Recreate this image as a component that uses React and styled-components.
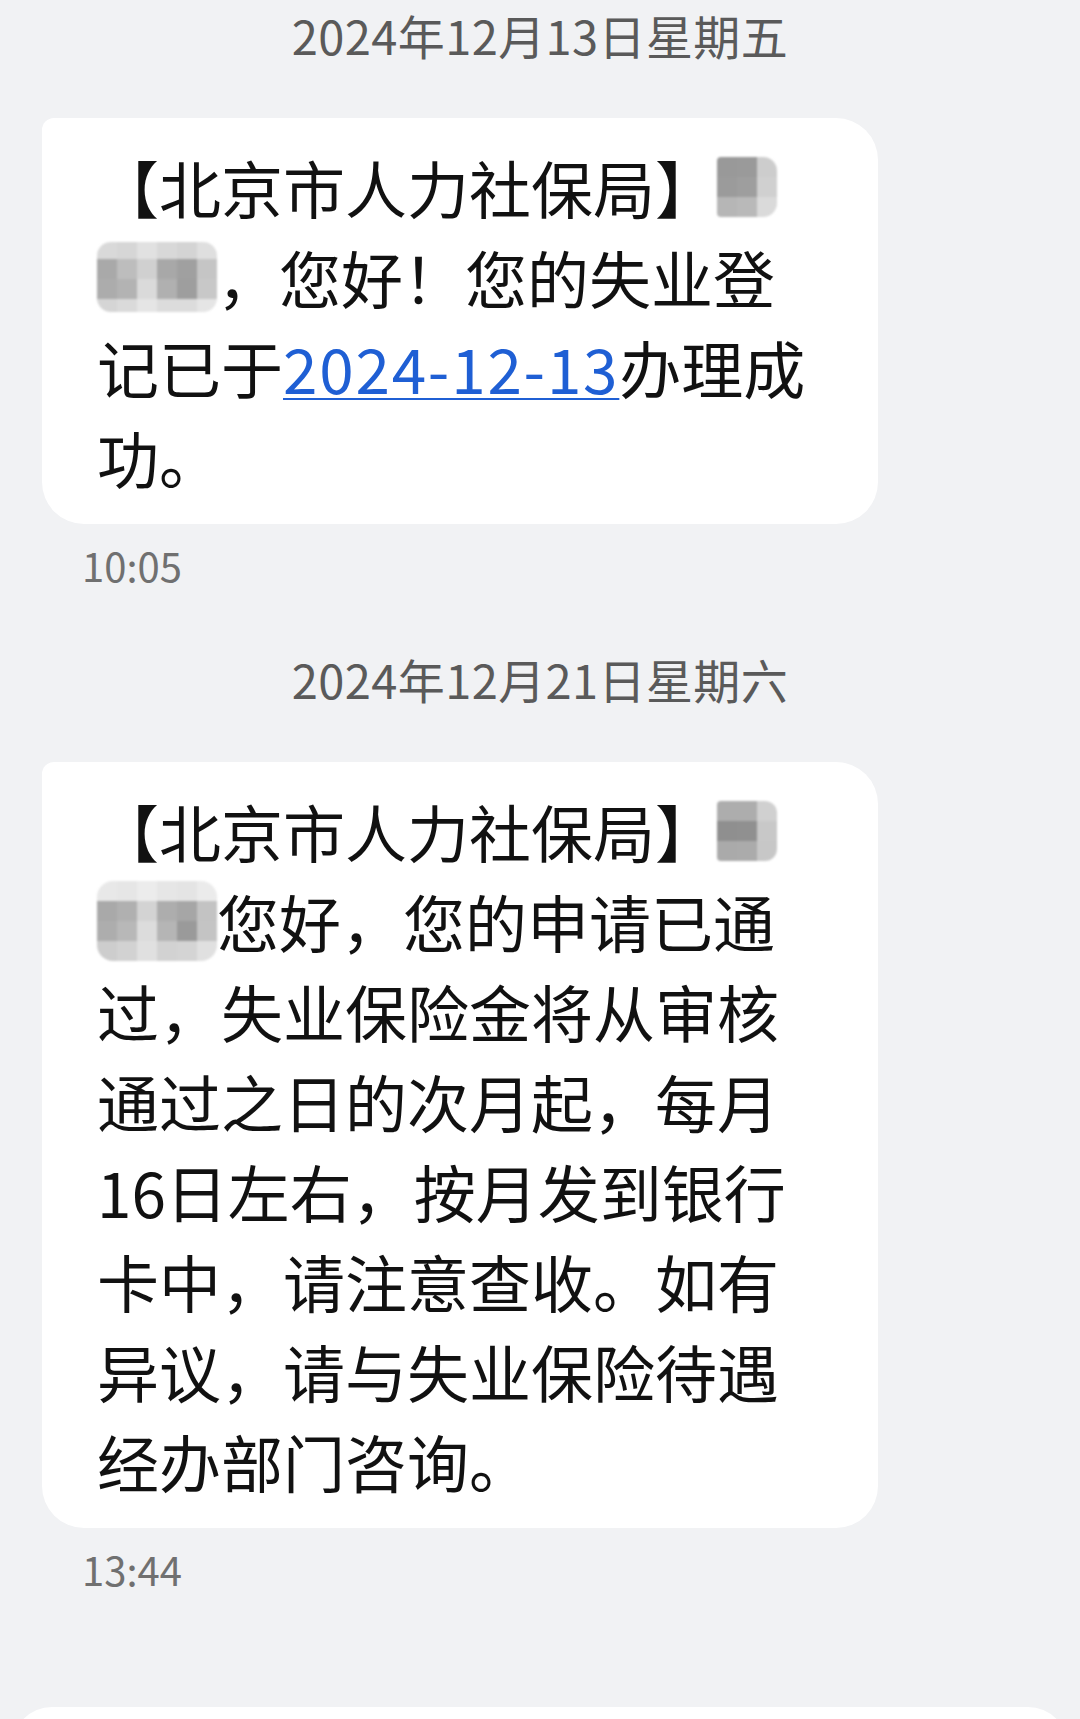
import React from "react";
import styled, { createGlobalStyle } from "styled-components";

const GlobalStyle = createGlobalStyle`
  html, body {
    margin: 0;
    padding: 0;
    background: #f1f2f4;
  }
  body {
    font-family: "Noto Sans CJK SC", "Noto Sans", sans-serif;
    -webkit-font-smoothing: antialiased;
  }
`;

const Page = styled.div`
  display: flex;
  flex-direction: column;
  height: 1719px;
  overflow: hidden;
  background: #f1f2f4;
`;

const DateLabel = styled.div`
  height: 70px;
  line-height: 70px;
  margin-top: ${(p) => p.$top}px;
  text-align: center;
  font-size: 47px;
  color: #5a5a5a;
  letter-spacing: 0.4px;
`;

const Bubble = styled.div`
  box-sizing: border-box;
  width: 836px;
  margin: 48px 0 0 42px;
  padding: 24px 40px 22px 55px;
  background: #ffffff;
  border-radius: 12px 42px 42px 42px;
  color: #111111;
  font-size: 62px;
`;

const Line = styled.div`
  display: flex;
  align-items: center;
  height: 90px;
  line-height: 90px;
  white-space: nowrap;
`;

const Link = styled.span`
  color: #1f5fd4;
  text-decoration: underline;
  text-decoration-thickness: 2px;
  text-underline-offset: 4px;
  letter-spacing: 1.8px;
`;

const TimeLabel = styled.div`
  height: 50px;
  line-height: 50px;
  margin: 16px 0 0 82px;
  font-size: 40px;
  color: #707070;
`;

const Composer = styled.div`
  height: 120px;
  margin: 113px 12px 0 12px;
  flex-shrink: 0;
  background: #ffffff;
  border-radius: 40px 40px 0 0;
`;

const Mosaic = styled.span`
  display: inline-grid;
  grid-template-columns: repeat(${(p) => p.$cols}, 20px);
  grid-template-rows: ${(p) => p.$rows};
  border-radius: ${(p) => p.$radius};
  overflow: hidden;
  filter: blur(0.8px);
  flex-shrink: 0;
`;

const Cell = styled.span`
  background: ${(p) => p.$tone};
`;

function Blur({ cols, rows, tones, radius }) {
  return (
    <Mosaic $cols={cols} $rows={rows} $radius={radius} aria-hidden="true">
      {tones.map((t, i) => (
        <Cell key={i} $tone={t} />
      ))}
    </Mosaic>
  );
}

const blurA = {
  cols: 3,
  rows: "20px 20px 20px",
  radius: "4px 14px 14px 4px",
  tones: [
    "#999999", "#9a9a9a", "#cdcdcd",
    "#9b9b9b", "#9e9e9e", "#d0d0d0",
    "#b6b6b6", "#b9b9b9", "#dadada",
  ],
};

const blurB = {
  cols: 6,
  rows: "17px 20px 20px 13px",
  radius: "14px",
  tones: [
    "#d9d9d9", "#d6d6d6", "#e1e1e1", "#d8d8d8", "#d4d4d4", "#dfdfdf",
    "#a9a9a9", "#bdbdbd", "#d0d0d0", "#a8a8a8", "#a0a0a0", "#c5c5c5",
    "#acacac", "#b3b3b3", "#dadada", "#b0b0b0", "#9e9e9e", "#c8c8c8",
    "#d5d5d5", "#dadada", "#e5e5e5", "#dcdcdc", "#dcdcdc", "#e5e5e5",
  ],
};

const blurC = {
  cols: 3,
  rows: "20px 20px 20px",
  radius: "4px 12px 12px 4px",
  tones: [
    "#adadad", "#adadad", "#d0d0d0",
    "#8f8f8f", "#909090", "#c8c8c8",
    "#aaaaaa", "#ababab", "#c7c7c7",
  ],
};

const blurD = {
  cols: 6,
  rows: "20px 20px 20px 20px",
  radius: "16px",
  tones: [
    "#e8e8e8", "#e6e6e6", "#ececec", "#e6e6e6", "#e4e4e4", "#ebebeb",
    "#a9a9a9", "#b0b0b0", "#d3d3d3", "#adadad", "#a6a6a6", "#c3c3c3",
    "#adadad", "#b8b8b8", "#dcdcdc", "#b5b5b5", "#9a9a9a", "#c4c4c4",
    "#cdcdcd", "#d2d2d2", "#e0e0e0", "#d2d2d2", "#d4d4d4", "#e0e0e0",
  ],
};

export default function App() {
  return (
    <>
      <GlobalStyle />
      <Page>
        <DateLabel $top={0}>2024年12月13日星期五</DateLabel>
        <Bubble>
          <Line>
            【北京市人力社保局】
            <Blur {...blurA} />
          </Line>
          <Line>
            <Blur {...blurB} />
            ，您好！您的失业登
          </Line>
          <Line>
            记已于<Link>2024-12-13</Link>办理成
          </Line>
          <Line>功。</Line>
        </Bubble>
        <TimeLabel>10:05</TimeLabel>

        <DateLabel $top={54}>2024年12月21日星期六</DateLabel>
        <Bubble>
          <Line>
            【北京市人力社保局】
            <Blur {...blurC} />
          </Line>
          <Line>
            <Blur {...blurD} />
            您好，您的申请已通
          </Line>
          <Line>过，失业保险金将从审核</Line>
          <Line>通过之日的次月起，每月</Line>
          <Line>16日左右，按月发到银行</Line>
          <Line>卡中，请注意查收。如有</Line>
          <Line>异议，请与失业保险待遇</Line>
          <Line>经办部门咨询。</Line>
        </Bubble>
        <TimeLabel>13:44</TimeLabel>
        <Composer />
      </Page>
    </>
  );
}
